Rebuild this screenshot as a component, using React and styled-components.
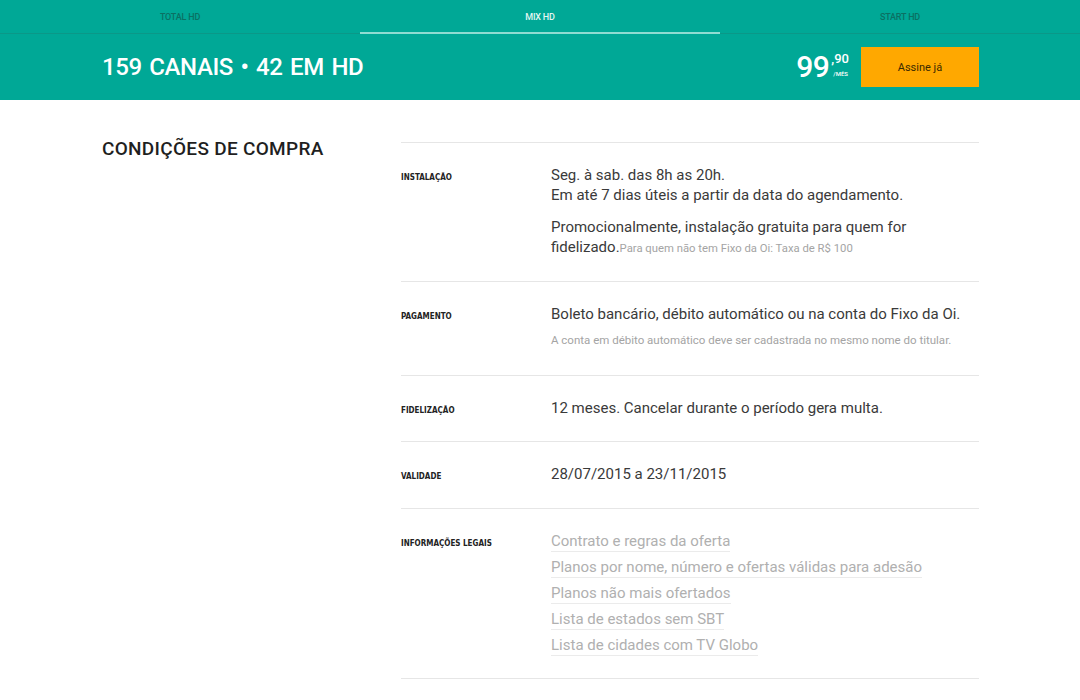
import styled, { createGlobalStyle } from 'styled-components'

const GlobalStyle = createGlobalStyle`
    html, body {
        margin: 0;
        padding: 0;
        background: #fff;
        font-family: Roboto, "Liberation Sans", sans-serif;
        color: #333;
    }
    * { box-sizing: border-box; }
`

const TEAL = '#00a896'

const Tabs = styled.nav`
    display: grid;
    grid-template-columns: repeat(3, 1fr);
    height: 34px;
    background: ${TEAL};
    border-bottom: 1px solid #0a9888;
`

const Tab = styled.a`
    display: flex;
    align-items: center;
    justify-content: center;
    margin-bottom: -1px;
    font-family: Roboto, sans-serif;
    font-size: 9px;
    font-weight: 500;
    letter-spacing: -0.2px;
    text-transform: uppercase;
    color: ${({ $active }) => ($active ? '#e3f6f2' : '#0b7063')};
    border-bottom: 2px solid ${({ $active }) => ($active ? '#8fdcd2' : 'transparent')};
    padding-top: 1px;
`

const Header = styled.header`
    display: flex;
    align-items: center;
    justify-content: space-between;
    height: 66px;
    padding: 0 101px 0 102px;
    background: ${TEAL};
    color: #fff;
`

const PlanTitle = styled.h1`
    margin: 0;
    font-family: Roboto, sans-serif;
    font-weight: 500;
    font-size: 24px;
    letter-spacing: -0.4px;
    word-spacing: 2px;
`

const Buy = styled.div`
    display: flex;
    align-items: center;
    gap: 12px;
`

const Price = styled.div`
    display: flex;
    align-items: flex-start;
    gap: 2px;
    font-family: Roboto, sans-serif;
`

const Whole = styled.span`
    font-size: 30px;
    font-weight: 500;
    line-height: 30px;
    letter-spacing: -0.5px;
`

const Cents = styled.span`
    display: flex;
    flex-direction: column;
    font-size: 13px;
    font-weight: 500;
    line-height: 14px;

    & small {
        font-size: 6px;
        font-weight: 500;
        line-height: 8px;
        margin-top: 4px;
        padding-left: 2px;
    }
`

const Button = styled.button`
    width: 118px;
    height: 40px;
    border: none;
    background: #ffa800;
    color: #3b2a00;
    font-family: Roboto, sans-serif;
    font-size: 11px;
    cursor: pointer;
`

const Main = styled.main`
    display: grid;
    grid-template-columns: 299px 1fr;
    padding: 38px 101px 0 102px;
`

const SectionTitle = styled.h2`
    margin: 0;
    font-family: Roboto, sans-serif;
    font-weight: 500;
    font-size: 19px;
    line-height: 22px;
    letter-spacing: 0.3px;
    color: #1f1f1f;
`

const List = styled.div`
    margin-top: 4px;
    border-top: 1px solid #e6e6e6;
`

const Row = styled.div`
    display: grid;
    grid-template-columns: 150px 1fr;
    padding: 23px 0 ${({ $pb }) => $pb || 23}px;
    border-bottom: 1px solid #e6e6e6;
`

const Label = styled.div`
    font-family: "DejaVu Sans Condensed", Roboto, sans-serif;
    font-size: 8px;
    font-weight: 700;
    line-height: 15px;
    padding-top: 4px;
    text-transform: uppercase;
    color: #222;
`

const Value = styled.div`
    font-size: 15px;
    line-height: 19.5px;
    color: #3a3a3a;

    & p {
        margin: 0;
    }
    & p + p {
        margin-top: 13px;
    }
`

const Note = styled.span`
    font-size: 11.3px;
    color: #a4a4a4;
`

const SubNote = styled.div`
    margin-top: 6px;
    font-size: 11.5px;
    line-height: 18px;
    color: #a4a4a4;
`

const Links = styled.div`
    display: flex;
    flex-direction: column;
    align-items: flex-start;
    gap: 6px;
`

const DocLink = styled.a`
    font-size: 15px;
    line-height: 19px;
    color: #b0b0b0;
    text-decoration: none;
    border-bottom: 1px solid #ebebeb;
    cursor: pointer;
`

const tabs = ['Total HD', 'Mix HD', 'Start HD']
const legal = [
    'Contrato e regras da oferta',
    'Planos por nome, número e ofertas válidas para adesão',
    'Planos não mais ofertados',
    'Lista de estados sem SBT',
    'Lista de cidades com TV Globo',
]

const App = () => {
    return (
        <>
            <GlobalStyle />
            <Tabs>
                {tabs.map((t, i) => (
                    <Tab key={t} $active={i === 1}>{t}</Tab>
                ))}
            </Tabs>
            <Header>
                <PlanTitle>159 CANAIS • 42 EM HD</PlanTitle>
                <Buy>
                    <Price>
                        <Whole>99</Whole>
                        <Cents>,90<small>/MÊS</small></Cents>
                    </Price>
                    <Button>Assine já</Button>
                </Buy>
            </Header>
            <Main>
                <SectionTitle>CONDIÇÕES DE COMPRA</SectionTitle>
                <List>
                    <Row $pb={23}>
                        <Label>Instalação</Label>
                        <Value>
                            <p>Seg. à sab. das 8h as 20h.<br />Em até 7 dias úteis a partir da data do agendamento.</p>
                            <p>Promocionalmente, instalação gratuita para quem for fidelizado.<Note>Para quem não tem Fixo da Oi: Taxa de R$ 100</Note></p>
                        </Value>
                    </Row>
                    <Row $pb={26}>
                        <Label>Pagamento</Label>
                        <Value>
                            Boleto bancário, débito automático ou na conta do Fixo da Oi.
                            <SubNote>A conta em débito automático deve ser cadastrada no mesmo nome do titular.</SubNote>
                        </Value>
                    </Row>
                    <Row>
                        <Label>Fidelização</Label>
                        <Value>12 meses. Cancelar durante o período gera multa.</Value>
                    </Row>
                    <Row>
                        <Label>Validade</Label>
                        <Value>28/07/2015 a 23/11/2015</Value>
                    </Row>
                    <Row $pb={22}>
                        <Label>Informações legais</Label>
                        <Links>
                            {legal.map((l) => (
                                <DocLink key={l}>{l}</DocLink>
                            ))}
                        </Links>
                    </Row>
                </List>
            </Main>
        </>
    )
}

export default App
